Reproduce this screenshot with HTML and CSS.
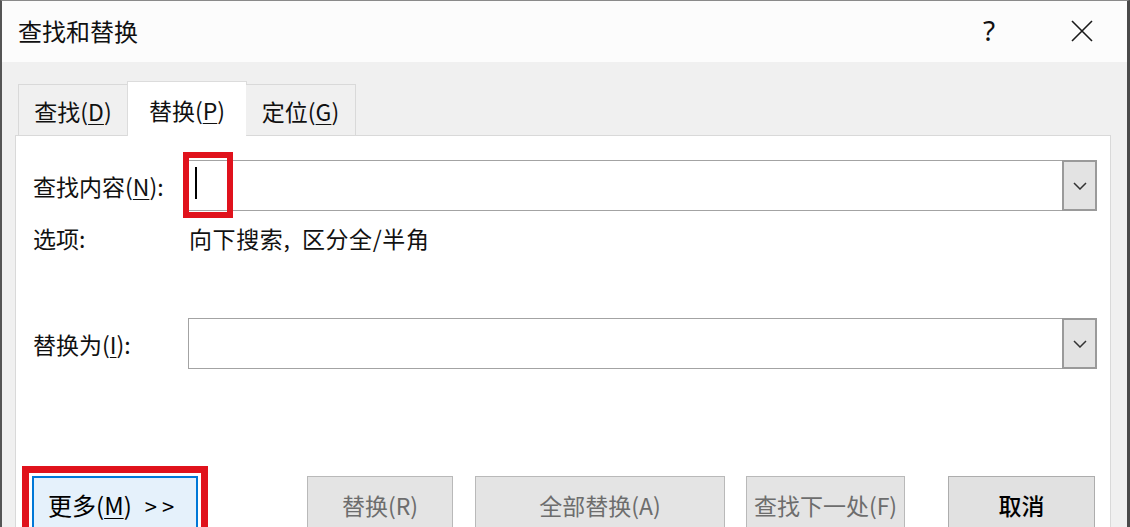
FILE: index.html
```html
<!DOCTYPE html>
<html lang="zh-CN">
<head>
<meta charset="utf-8">
<title>查找和替换</title>
<link rel="stylesheet" href="styles.css">
</head>
<body>
<div class="window">
  <div class="titlebar">
    <span class="title">查找和替换</span>
    <span class="help">?</span>
    <span class="close">
      <svg width="22" height="22" viewBox="0 0 22 22"><path d="M1 1L21 21M21 1L1 21" stroke="#1a1a1a" stroke-width="1.6" fill="none"/></svg>
    </span>
  </div>
  <div class="body">
    <div class="tabs">
      <div class="tab">查找(<u>D</u>)</div>
      <div class="tab active">替换(<u>P</u>)</div>
      <div class="tab">定位(<u>G</u>)</div>
    </div>
    <div class="panel">
      <div class="row">
        <label class="label">查找内容(<u>N</u>):</label>
        <div class="combo">
          <span class="caret"></span>
          <span class="drop"><svg width="14" height="8" viewBox="0 0 14 8"><path d="M1 1L7 7L13 1" stroke="#333" stroke-width="1.5" fill="none"/></svg></span>
        </div>
      </div>
      <div class="row options">
        <span class="label">选项:</span>
        <span class="opt-text">向下搜索,&nbsp; 区分全/半角</span>
      </div>
      <div class="row replace">
        <label class="label">替换为(<u>I</u>):</label>
        <div class="combo">
          <span class="drop"><svg width="14" height="8" viewBox="0 0 14 8"><path d="M1 1L7 7L13 1" stroke="#333" stroke-width="1.5" fill="none"/></svg></span>
        </div>
      </div>
      <div class="buttons">
        <button class="btn more">更多(<u>M</u>)<span class="arrows">&gt;&nbsp;&gt;</span></button>
        <button class="btn disabled w-replace">替换(R)</button>
        <button class="btn disabled w-all">全部替换(A)</button>
        <button class="btn disabled w-next">查找下一处(F)</button>
        <button class="btn w-cancel">取消</button>
      </div>
    </div>
  </div>
  <div class="hl hl-find"></div>
  <div class="hl hl-more"></div>
</div>
</body>
</html>
```
FILE: styles.css
```css
* { box-sizing: border-box; }
html, body { margin: 0; padding: 0; }
body {
  width: 1130px;
  height: 527px;
  overflow: hidden;
  font-family: "Noto Sans CJK SC", "Microsoft YaHei", sans-serif;
  color: #111;
  background: #f0f0f0;
}
u { text-decoration: underline; text-underline-offset: 3px; text-decoration-thickness: 1px; }
.window {
  position: relative;
  width: 1130px;
  height: 527px;
  border-left: 2px solid #555;
  border-right: 3px solid #4a4a4a;
  border-top: 1px solid #8a8a8a;
  background: #f0f0f0;
  overflow: hidden;
}
.titlebar {
  height: 61px;
  background: #fcfcfc;
  display: flex;
  align-items: center;
  padding-left: 16px;
}
.title { font-size: 24px; line-height: 30px; flex: 1; margin-top: -1px; }
.help { font-size: 28px; line-height: 30px; width: 24px; margin-right: 64px; margin-top: -4px; font-family: "Noto Sans", sans-serif; }
.close { width: 22px; height: 22px; margin-right: 34px; margin-top: -2px; display: flex; }
.body {
  padding: 19px 16px 0 13px;
}
.tabs {
  display: flex;
  align-items: flex-end;
  padding-left: 3px;
  position: relative;
  z-index: 1;
}
.tab {
  height: 51px;
  width: 110px;
  border: 1px solid #d9d9d9;
  border-bottom: none;
  background: #f0f0f0;
  font-size: 23px;
  line-height: 48px;
  text-align: center;
  padding-top: 2px;
}
.tab.active {
  height: 55px;
  width: 120px;
  background: #fff;
  margin-bottom: -1px;
  border-color: #dcdcdc;
  line-height: 52px;
}
.tab + .tab.active { margin-left: -1px; }
.tab.active + .tab { margin-left: -1px; border-left: none; }
.panel {
  background: #fff;
  border: 1px solid #d9d9d9;
  height: 420px;
  padding: 24px 13px 0 17px;
}
.row {
  display: grid;
  grid-template-columns: 155px 1fr;
  align-items: center;
}
.label { font-size: 23px; line-height: 30px; }
.combo {
  position: relative;
  height: 51px;
  border: 1px solid #a3a3a3;
  background: #fff;
  display: flex;
  align-items: center;
  justify-content: flex-end;
}
.caret {
  position: absolute;
  left: 6px;
  top: 6px;
  width: 2px;
  height: 32px;
  background: #000;
}
.drop {
  width: 35px;
  height: 51px;
  margin: -1px -1px -1px 0;
  border: 2px solid #9a9a9a;
  background: #e3e3e3;
  display: flex;
  align-items: center;
  justify-content: center;
}
.options { margin-top: 12px; }
.opt-text { font-size: 23px; line-height: 30px; padding-left: 1px; letter-spacing: 0.6px; }
.replace { margin-top: 65px; }
.buttons {
  display: flex;
  margin-top: 107px;
  margin-left: -1px;
}
.btn {
  height: 62px;
  font-family: inherit;
  font-size: 23px;
  line-height: 30px;
  padding: 0 0 4px;
  background: #e1e1e1;
  border: 1px solid #adadad;
  color: #000;
  flex: none;
}
.btn.more {
  width: 166px;
  background: #e5f1fb;
  border: 2px solid #0078d7;
  margin-right: 109px;
  text-align: left;
  padding-left: 14px;
  font-size: 24px;
}
.arrows { margin-left: 13px; font-size: 22px; }
.btn.disabled {
  background: #e4e4e4;
  border-color: #b9b9b9;
  color: #6d6d6d;
}
.w-replace { width: 146px; margin-right: 22px; }
.w-all { width: 250px; margin-right: 21px; }
.w-next { width: 159px; margin-right: 43px; }
.w-cancel { width: 147px; font-weight: 500; }
.hl {
  position: absolute;
  border: 6px solid #e0121c;
  z-index: 5;
}
.hl-find { left: 181px; top: 151px; width: 50px; height: 66px; }
.hl-more { left: 20px; top: 465px; width: 186px; height: 80px; border-width: 7px; }
```
